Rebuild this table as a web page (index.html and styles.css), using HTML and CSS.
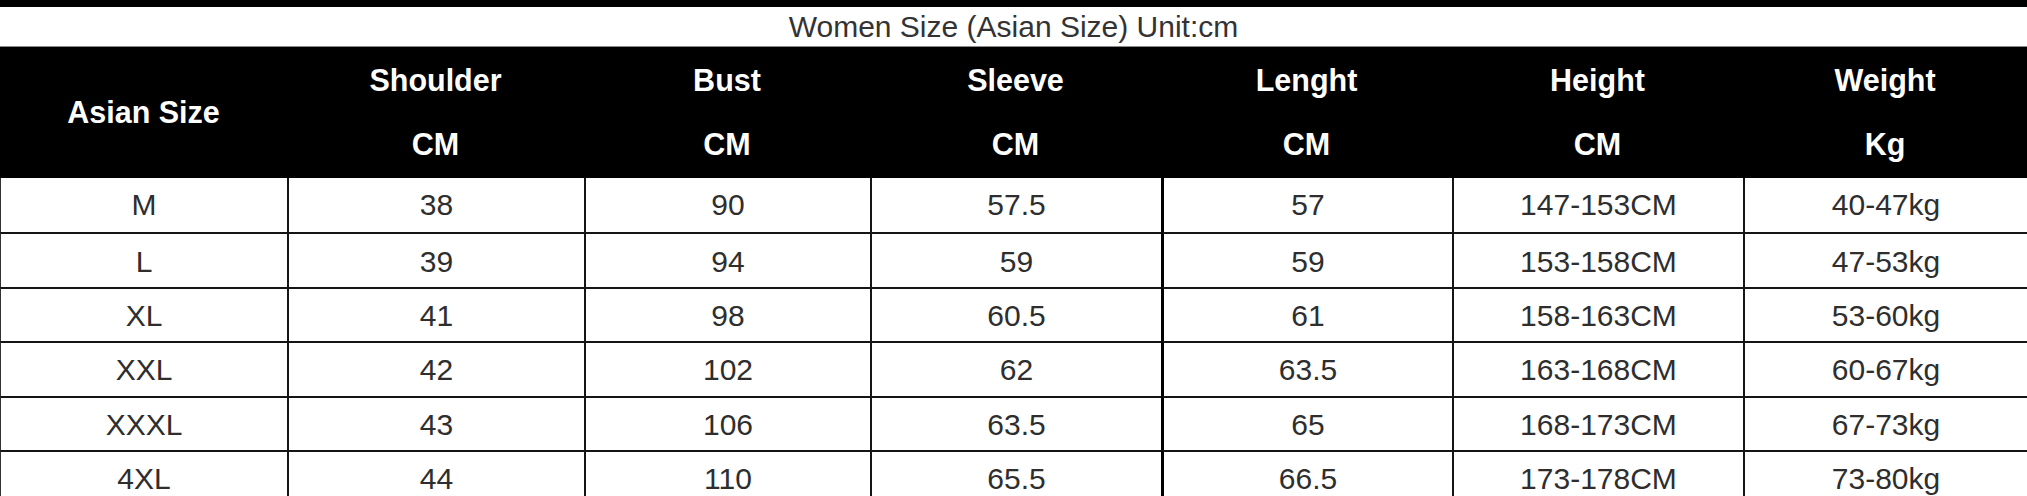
FILE: index.html
```html
<!DOCTYPE html>
<html lang="en">
<head>
<meta charset="utf-8">
<title>Women Size (Asian Size)</title>
<link rel="stylesheet" href="styles.css">
</head>
<body>
<div class="sheet">
  <div class="top-bar"></div>
  <div class="title">Women Size (Asian Size) Unit:cm</div>
  <div class="grid">
    <div class="hcell span2">Asian Size</div>
    <div class="hcell">Shoulder</div>
    <div class="hcell">Bust</div>
    <div class="hcell">Sleeve</div>
    <div class="hcell">Lenght</div>
    <div class="hcell">Height</div>
    <div class="hcell">Weight</div>
    <div class="hcell unit">CM</div>
    <div class="hcell unit">CM</div>
    <div class="hcell unit">CM</div>
    <div class="hcell unit">CM</div>
    <div class="hcell unit">CM</div>
    <div class="hcell unit">Kg</div>

    <div class="cell first r1">M</div><div class="cell r1">38</div><div class="cell r1">90</div><div class="cell r1">57.5</div><div class="cell thick r1">57</div><div class="cell r1">147-153CM</div><div class="cell r1">40-47kg</div>
    <div class="cell first">L</div><div class="cell">39</div><div class="cell">94</div><div class="cell">59</div><div class="cell thick">59</div><div class="cell">153-158CM</div><div class="cell">47-53kg</div>
    <div class="cell first">XL</div><div class="cell">41</div><div class="cell">98</div><div class="cell">60.5</div><div class="cell thick">61</div><div class="cell">158-163CM</div><div class="cell">53-60kg</div>
    <div class="cell first">XXL</div><div class="cell">42</div><div class="cell">102</div><div class="cell">62</div><div class="cell thick">63.5</div><div class="cell">163-168CM</div><div class="cell">60-67kg</div>
    <div class="cell first">XXXL</div><div class="cell">43</div><div class="cell">106</div><div class="cell">63.5</div><div class="cell thick">65</div><div class="cell">168-173CM</div><div class="cell">67-73kg</div>
    <div class="cell first">4XL</div><div class="cell">44</div><div class="cell">110</div><div class="cell">65.5</div><div class="cell thick">66.5</div><div class="cell">173-178CM</div><div class="cell">73-80kg</div>
  </div>
</div>
</body>
</html>
```
FILE: styles.css
```css
html, body {
  margin: 0;
  padding: 0;
  background: #ffffff;
}

.sheet {
  width: 2027px;
  height: 496px;
  overflow: hidden;
  font-family: "Liberation Sans", Arial, sans-serif;
}

.top-bar {
  height: 7px;
  background: #000;
}

.title {
  height: 39px;
  border-bottom: 1px solid #8a8a8a;
  display: flex;
  align-items: center;
  justify-content: center;
  font-size: 30px;
  color: #333;
  background: #fff;
}

.grid {
  display: grid;
  grid-template-columns: 287px 297px 286px 291px 291px 291px 1fr;
  grid-template-rows: 66px 65px;
  grid-auto-rows: 54.4px;
}

.hcell {
  background: #000;
  color: #fff;
  font-weight: bold;
  font-size: 30.5px;
  display: flex;
  align-items: center;
  justify-content: center;
}

.hcell.span2 {
  grid-row: span 2;
}

.hcell.unit {
  padding-bottom: 2px;
}

.cell {
  display: flex;
  align-items: center;
  justify-content: center;
  font-size: 30px;
  color: #2e2e2e;
  border-top: 2px solid #151515;
  border-left: 2px solid #151515;
  box-sizing: border-box;
  padding-top: 2px;
}

.cell.r1 {
  border-top: none;
  padding-top: 0;
}

.cell.first {
  border-left: 1px solid #333;
}

.cell.thick {
  border-left: 3px solid #000;
}
```
